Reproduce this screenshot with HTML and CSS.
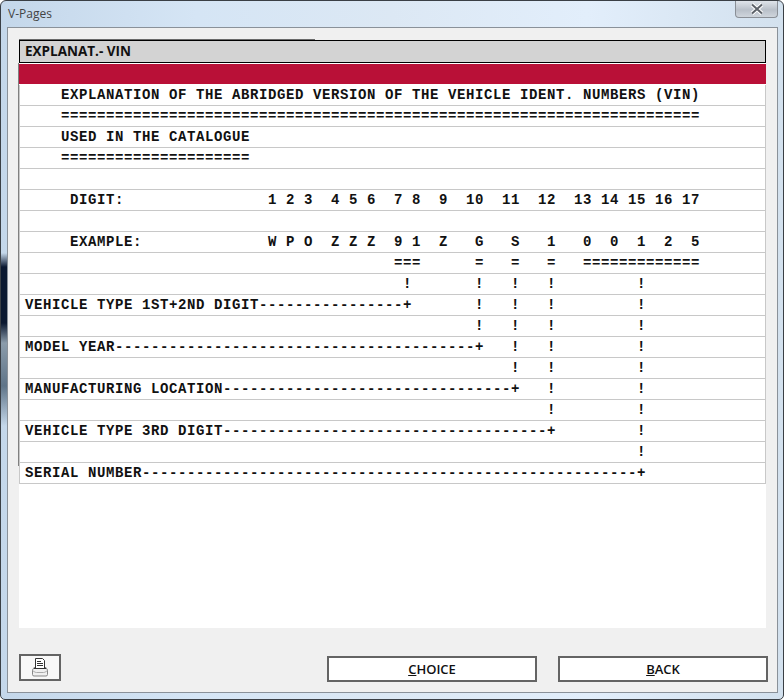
FILE: index.html
```html
<!DOCTYPE html>
<html lang="en">
<head>
<meta charset="utf-8">
<title>V-Pages</title>
<link rel="stylesheet" href="styles.css">
</head>
<body>
<div class="window">
  <div class="titlebar">
    <span class="title">V-Pages</span>
    <button class="close" aria-label="Close">
      <svg width="18" height="12" viewBox="0 0 18 12"><path class="x-halo" d="M4 1.500 14 10.500M14 1.500 4 10.500"/><path class="x-mark" d="M4 1.500 14 10.500M14 1.500 4 10.500"/></svg>
    </button>
  </div>
  <div class="client">
    <div class="panel">
      <div class="heading">EXPLANAT.- VIN</div>
      <div class="redbar"></div>
      <div class="row">    EXPLANATION OF THE ABRIDGED VERSION OF THE VEHICLE IDENT. NUMBERS (VIN)</div>
      <div class="row">    =======================================================================</div>
      <div class="row">    USED IN THE CATALOGUE</div>
      <div class="row">    =====================</div>
      <div class="row"></div>
      <div class="row">     DIGIT:                1 2 3  4 5 6  7 8  9  10  11  12  13 14 15 16 17</div>
      <div class="row"></div>
      <div class="row">     EXAMPLE:              W P O  Z Z Z  9 1  Z   G   S   1   0  0  1  2  5</div>
      <div class="row">                                         ===      =   =   =   =============</div>
      <div class="row">                                          !       !   !   !         !</div>
      <div class="row">VEHICLE TYPE 1ST+2ND DIGIT----------------+       !   !   !         !</div>
      <div class="row">                                                  !   !   !         !</div>
      <div class="row">MODEL YEAR----------------------------------------+   !   !         !</div>
      <div class="row">                                                      !   !         !</div>
      <div class="row">MANUFACTURING LOCATION--------------------------------+   !         !</div>
      <div class="row">                                                          !         !</div>
      <div class="row">VEHICLE TYPE 3RD DIGIT------------------------------------+         !</div>
      <div class="row">                                                                    !</div>
      <div class="row">SERIAL NUMBER-------------------------------------------------------+</div>
    </div>
    <div class="actions">
      <button class="btn print" aria-label="Print">
        <svg width="18" height="19" viewBox="0 0 18 19"><path class="p-body" d="M3 9.500 1.500 12v4.500a1.500 1.500 0 0 0 1.500 1.500h12a1.500 1.500 0 0 0 1.500-1.500V12L15 9.500z"/><path class="p-tray" d="M1.500 12.500c2 1.500 3 2 4 2h7c1 0 2-.5 4-2"/><path class="p-sheet" d="M4.500.5h7l2 2v8h-9z"/><path class="p-lines" d="M6 3.500h4M6 5.500h6M6 7.500h6M3 10.500h12"/></svg>
      </button>
      <button class="btn wide choice"><u>C</u>HOICE</button>
      <button class="btn wide back"><u>B</u>ACK</button>
    </div>
  </div>
</div>
</body>
</html>
```
FILE: styles.css
```css
html, body { margin: 0; padding: 0; }
body { width: 784px; height: 700px; overflow: hidden; background: #fff; }
.window {
  box-sizing: border-box; width: 784px; height: 700px;
  display: flex; flex-direction: column;
  padding: 0 5px 6px 6px;
  border: 1px solid #3a3f45; border-radius: 6px 6px 5px 5px;
  background:
    linear-gradient(180deg, transparent 252px, #0b1830 266px, #0b1830 322px, #8b9cab 342px, #5f7488 385px, transparent 425px) 0 0 / 6px 100% no-repeat,
    linear-gradient(90deg, #c4d7ea 0%, #d5e5f5 25%, #dce8f4 50%, #e2eefb 75%, #d3e1ee 100%);
}
.titlebar { height: 26px; flex: none; display: flex; justify-content: space-between; align-items: flex-start; }
.title { font: 12px/26px "Open Sans", "Liberation Sans", sans-serif; color: #444; padding-left: 1px; }
.close {
  width: 43px; height: 17px; margin: 0; padding: 0; border: 1px solid #8a8f96; border-top: 0;
  border-radius: 0 0 4px 4px; background: linear-gradient(#dfe4ea, #b9c0c9 55%, #cfd5dc);
  display: flex; align-items: center; justify-content: center;
}
.x-halo { fill: none; stroke: #fff; stroke-width: 4; }
.x-mark { fill: none; stroke: #5d6269; stroke-width: 2; }
.client {
  flex: 1; min-height: 0; display: flex; flex-direction: column;
  border: 1px solid #8a9199; background: #f0f0f0; padding: 12px 11px 0 11px;
}
.panel { position: relative; height: 588px; flex: none; background: #fff; }
.panel::before {
  content: ""; position: absolute; left: -1px; top: 23px; width: 1px; height: 403px; background: #808080;
}
.panel::after {
  content: ""; position: absolute; left: 0; top: -1px; width: 296px; height: 1px; background: #6a6a6a;
}
.heading {
  box-sizing: border-box; height: 23px; padding-left: 5px;
  background: #d3d3d3; border: 1px solid #000;
  font: 700 13.5px/21px "Open Sans", "Liberation Sans", sans-serif; color: #111;
}
.redbar { height: 20px; margin: 1px 0; background: #b91037; }
.row {
  box-sizing: border-box; height: 21px; padding-left: 5px;
  border-bottom: 1px solid #c8c8c8; border-left: 1px solid #c8c8c8; border-right: 1px solid #c8c8c8;
  font: bold 14px/21px "Liberation Mono", "Courier New", monospace; letter-spacing: 0.6px;
  color: #111; white-space: pre;
}
.actions { display: flex; align-items: flex-start; padding-top: 26px; }
.btn {
  box-sizing: border-box; flex: none; padding: 0; border: 2px solid #646464; background: #fff; color: #111;
  font: 600 13px/1 "Open Sans", "Liberation Sans", sans-serif;
}
.print { width: 42px; height: 27px; display: flex; align-items: center; justify-content: center; background: #f8f8f8; }
.wide { height: 26px; margin-top: 2px; }
.choice { width: 210px; margin-left: 266px; }
.back { width: 210px; margin-left: 21px; }
.p-body { fill: #f0f0f0; stroke: #888; }
.p-tray { fill: none; stroke: #aaa; }
.p-sheet { fill: #fff; stroke: #333; }
.p-lines { fill: none; stroke: #333; }
```
